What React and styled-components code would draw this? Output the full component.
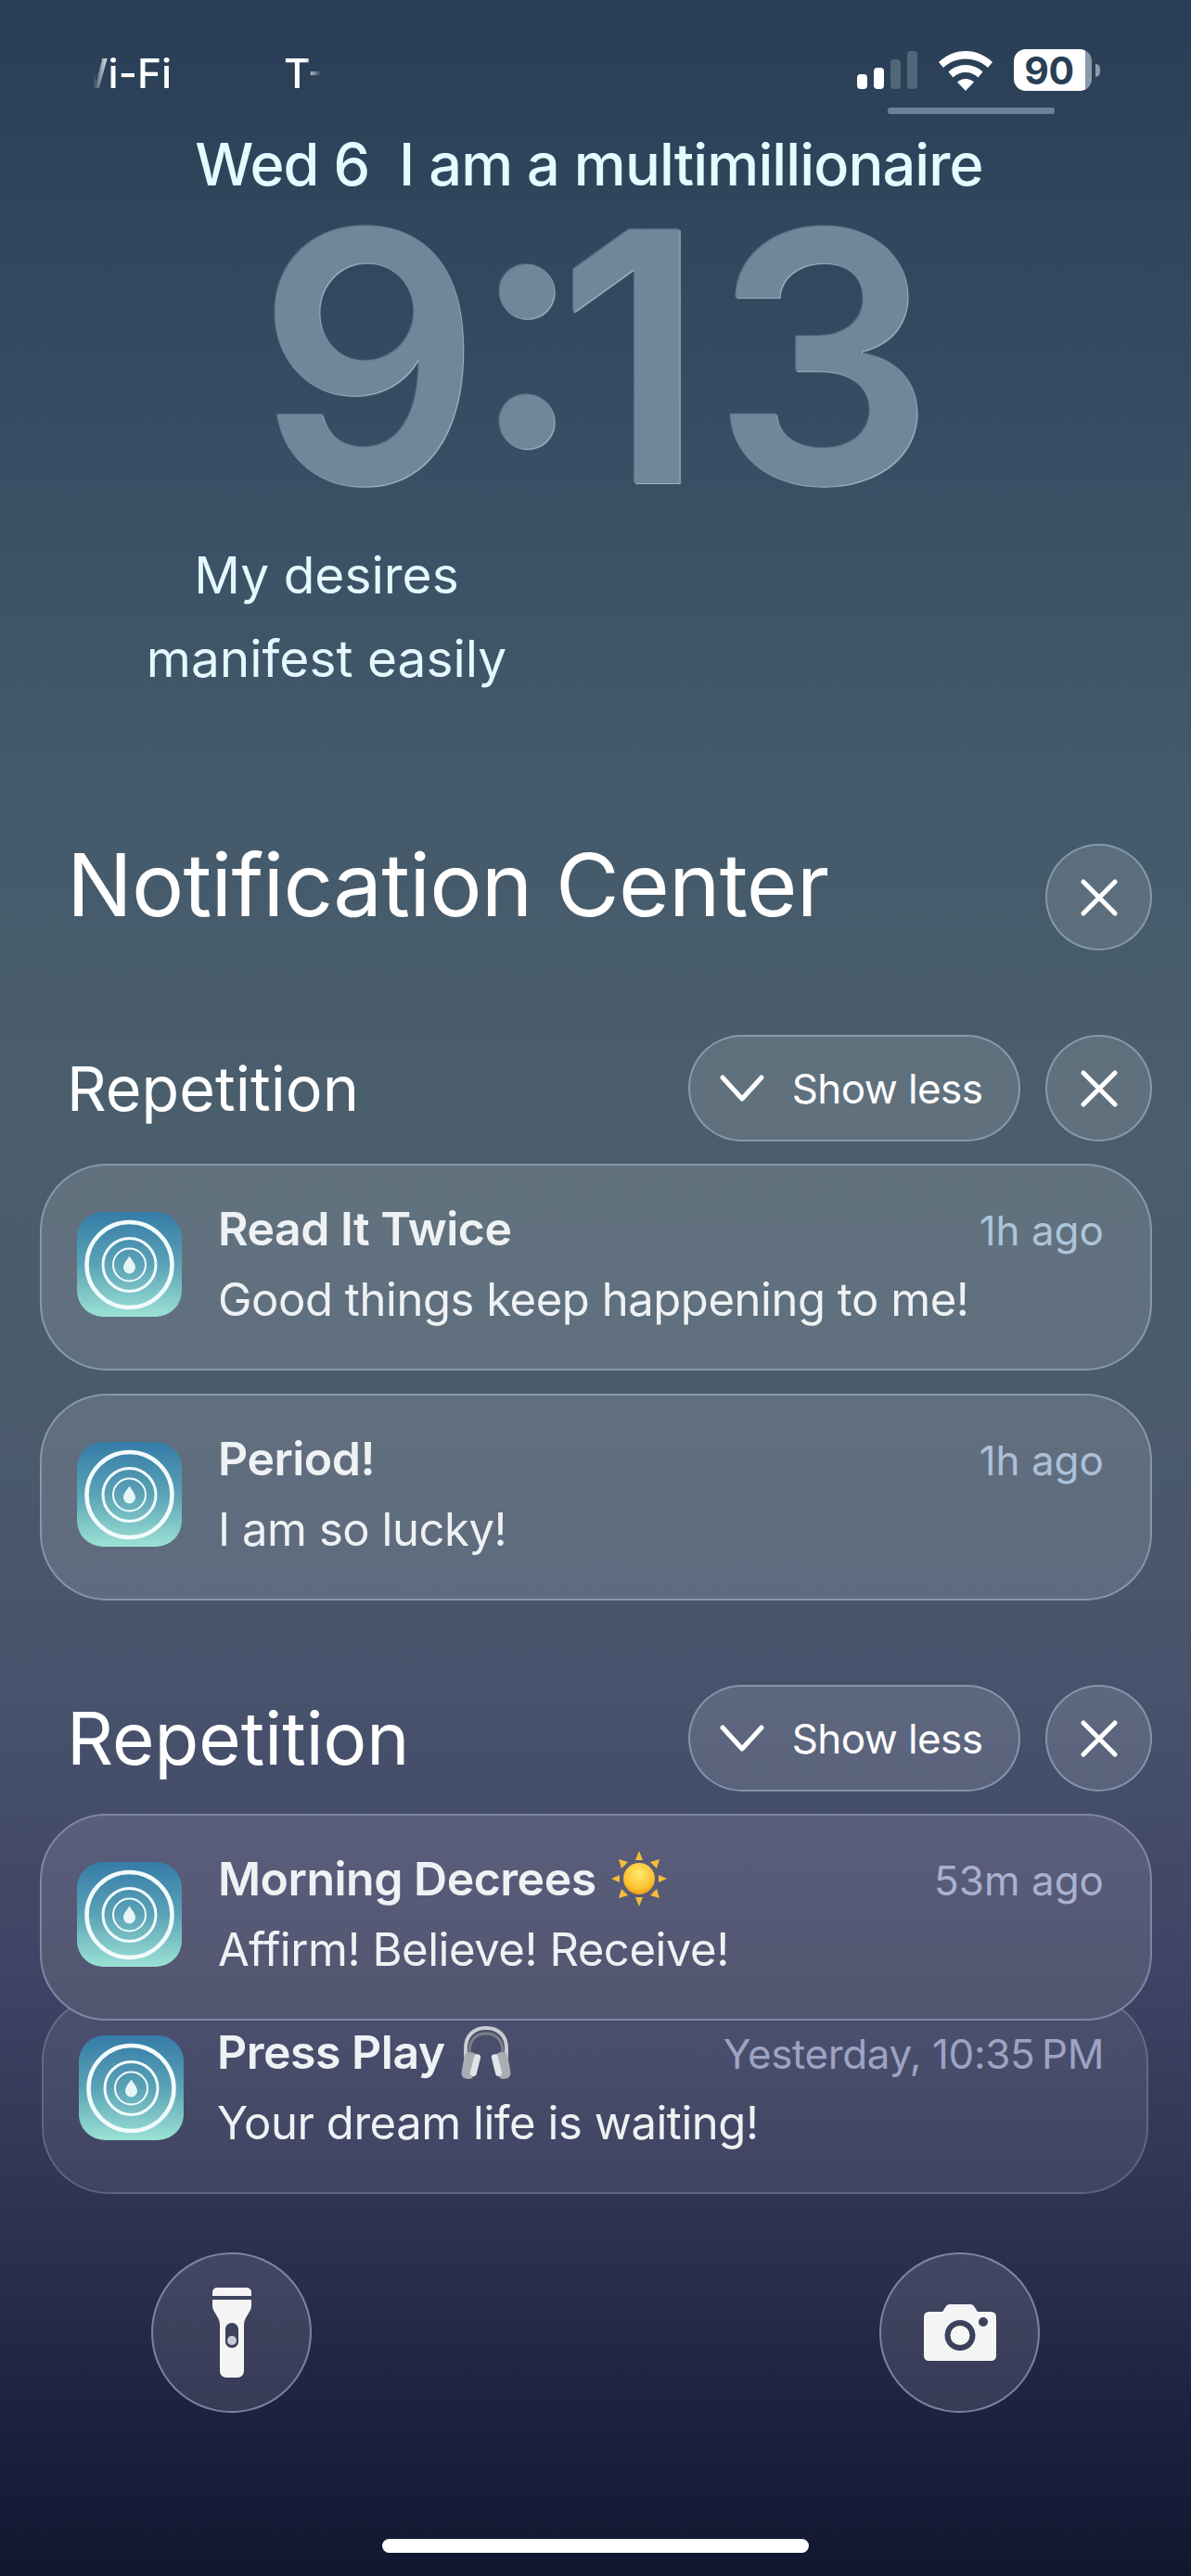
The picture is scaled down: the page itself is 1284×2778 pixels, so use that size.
import styled, { createGlobalStyle } from 'styled-components';

const GlobalStyle = createGlobalStyle`
  html, body {
    margin: 0;
    padding: 0;
    background: #111730;
  }
`;

const Page = styled.div`
  width: 1284px;
  height: 2778px;
  overflow: hidden;
  display: flex;
  flex-direction: column;
  font-family: Inter, "Liberation Sans", sans-serif;
  color: #fff;
  background: linear-gradient(
    180deg,
    #293e56 0%,
    #344c62 15%,
    #435a6b 30%,
    #4b5e6c 44%,
    #4a5a6c 56%,
    #47526c 66%,
    #3f4566 76%,
    #2d3151 87%,
    #1e2342 93%,
    #111730 100%
  );
`;

const StatusBar = styled.div`
  height: 130px;
  display: flex;
  justify-content: space-between;
  padding: 53px 98px 0 100px;
  box-sizing: border-box;
`;

const Carriers = styled.div`
  display: flex;
  gap: 121px;
  height: 52px;
  align-items: center;
`;

const FadedText = styled.div`
  width: ${({ $width }) => $width}px;
  overflow: hidden;
  display: flex;
  justify-content: ${({ $end }) => ($end ? 'flex-end' : 'flex-start')};
  white-space: nowrap;
  font-size: 44px;
  font-weight: 500;
  mask-image: linear-gradient(${({ $end }) => ($end ? '90deg' : '270deg')}, transparent 0, #000 18px);
`;

const StatusRight = styled.div`
  display: flex;
  flex-direction: column;
  align-items: flex-start;
`;

const StatusIcons = styled.div`
  height: 45px;
  display: flex;
  align-items: flex-end;
`;

const Signal = styled.div`
  display: flex;
  align-items: flex-end;
  gap: 7px;
  height: 42px;
  margin-right: 23px;
  margin-bottom: 2px;
`;

const SignalBar = styled.span`
  width: 11px;
  height: ${({ $h }) => $h}px;
  border-radius: 4px;
  background: ${({ $on }) => ($on ? '#fff' : '#526679')};
`;

const Battery = styled.div`
  width: 84px;
  height: 45px;
  margin-left: 23px;
  border-radius: 13px;
  background: linear-gradient(90deg, #fff 0, #fff 92%, #8c9aa8 92%, #8c9aa8 100%);
  display: flex;
  align-items: center;
  justify-content: center;
  padding-right: 8px;
  box-sizing: border-box;
  color: #2a3f57;
  font-size: 41px;
  font-weight: 700;
  letter-spacing: -0.5px;
`;

const BatteryNub = styled.span`
  width: 5px;
  height: 14px;
  margin: 0 0 15px 4px;
  border-radius: 0 7px 7px 0;
  background: #8c9aa8;
`;

const StatusUnderline = styled.div`
  width: 180px;
  height: 7px;
  margin: 18px 0 0 33px;
  border-radius: 3px;
  background: #6a8299;
`;

const DateLine = styled.div`
  height: 94px;
  line-height: 94px;
  text-align: center;
  white-space: pre;
  font-size: 63px;
  font-weight: 500;
  letter-spacing: -0.9px;
  color: #e0fdff;
  padding-right: 14px;
`;

const Clock = styled.div`
  height: 330px;
  margin-top: -4px;
  padding-right: 9px;
  line-height: 330px;
  text-align: center;
  font-size: 376px;
  font-weight: 600;
  color: #6f869b;
  text-shadow: 1px 1px 1px rgba(235, 245, 255, 0.65), -1px -1px 1px rgba(235, 245, 255, 0.25);
`;

const ClockPart = styled.span`
  letter-spacing: ${({ $gap }) => $gap}px;
`;

const ClockColon = styled(ClockPart)`
  display: inline-block;
  transform: translateY(-40px);
`;

const Widget = styled.div`
  width: 704px;
  margin-top: 25px;
  text-align: center;
  font-size: 55px;
  line-height: 90px;
  font-weight: 400;
  color: #e4f8fd;
`;

const HeaderRow = styled.div`
  display: flex;
  align-items: center;
  justify-content: space-between;
  padding: 0 42px 0 72px;
  height: 115px;
  margin-top: ${({ $top }) => $top}px;
`;

const CenterTitle = styled.div`
  font-size: 94px;
  font-weight: 400;
  letter-spacing: -0.8px;
  padding-bottom: 28px;
`;

const GroupTitle = styled.div`
  font-size: ${({ $size }) => $size}px;
  font-weight: 400;
`;

const Actions = styled.div`
  display: flex;
  gap: 27px;
`;

const Glass = styled.button`
  border: 2px solid rgba(170, 198, 218, 0.5);
  background: rgba(255, 255, 255, 0.12);
  color: #fff;
  font-family: inherit;
  padding: 0;
  box-sizing: border-box;
  display: flex;
  align-items: center;
  justify-content: center;
`;

const RoundButton = styled(Glass)`
  width: 115px;
  height: 115px;
  border-radius: 50%;
`;

const Pill = styled(Glass)`
  width: 358px;
  height: 115px;
  padding-right: 7px;
  border-radius: 58px;
  gap: 30px;
  font-size: 44px;
  font-weight: 400;
  letter-spacing: -0.6px;
`;

const Cards = styled.div`
  display: flex;
  flex-direction: column;
  gap: ${({ $gap }) => $gap}px;
  padding: 0 42px 0 43px;
  margin-top: ${({ $top }) => $top}px;
`;

const Card = styled.div`
  position: relative;
  z-index: 2;
  height: 223px;
  padding: 0 50px 6px 38px;
  box-sizing: border-box;
  display: flex;
  align-items: center;
  gap: 39px;
  border-radius: 72px;
  border: 2px solid rgba(175, 200, 222, 0.48);
  background: rgba(255, 255, 255, 0.125);
`;

// sits in front of the tucked card, so it can't be see-through
const FrontCard = styled(Card)`
  border-color: #7f85a6;
  background: linear-gradient(180deg, #5a5e7c 0%, #51556f 100%);
`;

const TuckedCard = styled(Card)`
  z-index: 1;
  height: 215px;
  margin: -28px 4px 0 2px;
  padding: 0 46px 14px 38px;
  gap: 36px;
  border-color: rgba(170, 180, 215, 0.28);
  background: rgba(255, 255, 255, 0.08);
`;

const AppIcon = styled.svg`
  width: 113px;
  height: 113px;
  flex: none;
`;

const CardText = styled.div`
  flex: 1;
  min-width: 0;
  display: flex;
  flex-direction: column;
  gap: 17px;
`;

const TitleRow = styled.div`
  display: flex;
  align-items: baseline;
  justify-content: space-between;
  height: 60px;
  line-height: 60px;
`;

const CardTitle = styled.div`
  display: flex;
  align-items: center;
  gap: 16px;
  font-size: 50px;
  font-weight: 600;
  letter-spacing: -0.5px;
  color: #eff2f4;
`;

const CardTime = styled.div`
  font-size: 44px;
  font-weight: 400;
  letter-spacing: ${({ $tight }) => ($tight ? '-0.4px' : '0')};
  color: ${({ $tint }) => $tint};
`;

const CardBody = styled.div`
  height: 60px;
  line-height: 60px;
  font-size: 49px;
  font-weight: 400;
  letter-spacing: -0.45px;
  color: #eff2f4;
`;

const BottomRow = styled.div`
  display: flex;
  justify-content: space-between;
  padding: 0 163px;
  margin-top: 63px;
`;

const QuickButton = styled(Glass)`
  width: 173px;
  height: 173px;
  border-radius: 50%;
  border-color: rgba(165, 172, 205, 0.62);
  background: rgba(255, 255, 255, 0.115);
`;

const HomeBar = styled.div`
  width: 460px;
  height: 15px;
  margin: 136px auto 0;
  border-radius: 8px;
  background: #fff;
`;

const CloseIcon = () => (
  <svg width="40" height="40" viewBox="0 0 40 40">
    <path d="M3 3 L37 37 M37 3 L3 37" stroke="#fff" strokeWidth="5" strokeLinecap="round" />
  </svg>
);

const ChevronIcon = () => (
  <svg width="48" height="30" viewBox="0 0 48 30">
    <path d="M3 3 L24 26 L45 3" fill="none" stroke="#fff" strokeWidth="5" strokeLinecap="round" strokeLinejoin="round" />
  </svg>
);

const WifiIcon = () => (
  <svg width="58" height="43" viewBox="0 0 58 43">
    <path d="M29 0 C18 0 8 4.5 0 12 L5 18 C11.5 12 19.8 8.500 29 8.500 C38.200 8.500 46.500 12 53 18 L58 12 C50 4.500 40 0 29 0 Z" fill="#fff" />
    <path d="M29 15 C22 15 15.500 17.800 10.500 22.500 L15.500 28.500 C19 25 23.800 23 29 23 C34.200 23 39 25 42.500 28.500 L47.500 22.500 C42.500 17.800 36 15 29 15 Z" fill="#fff" />
    <path d="M29 30 C25.500 30 22.500 31.300 20 33.500 L29 43 L38 33.500 C35.500 31.300 32.500 30 29 30 Z" fill="#fff" />
  </svg>
);

const RippleIcon = ({ id }) => (
  <AppIcon viewBox="0 0 113 113">
    <defs>
      <linearGradient id={id} x1="0" y1="0" x2="0" y2="1">
        <stop offset="0" stopColor="#357ca8" />
        <stop offset="0.5" stopColor="#5ba2b6" />
        <stop offset="1" stopColor="#9be2d5" />
      </linearGradient>
    </defs>
    <rect width="113" height="113" rx="28" fill={`url(#${id})`} />
    <g fill="none" stroke="#f2fbfc">
      <circle cx="56.500" cy="57" r="46" strokeWidth="4.500" />
      <circle cx="56.500" cy="57" r="28.500" strokeWidth="3" />
      <circle cx="56.500" cy="57" r="17.500" strokeWidth="2" />
    </g>
    <path d="M56.500 47.500 C60 53 63 56 63 60 A6.500 6.500 0 0 1 50 60 C50 56 53 53 56.500 47.500 Z" fill="#e6f5f7" />
  </AppIcon>
);

const SunEmoji = () => (
  <svg width="60" height="60" viewBox="0 0 60 60">
    <defs>
      <radialGradient id="sunFill" cx="0.5" cy="0.35" r="0.7">
        <stop offset="0" stopColor="#ffe96b" />
        <stop offset="0.7" stopColor="#fbc02e" />
        <stop offset="1" stopColor="#e88d16" />
      </radialGradient>
    </defs>
    <g fill="#f7bd38">
      <path d="M30 0 L34 10 L26 10 Z" />
      <path d="M30 60 L34 50 L26 50 Z" />
      <path d="M0 30 L9 26 L9 34 Z" />
      <path d="M60 30 L51 26 L51 34 Z" />
      <path d="M8 9 L18 12 L11 19 Z" />
      <path d="M52 9 L42 12 L49 19 Z" />
      <path d="M8 51 L18 48 L11 41 Z" />
      <path d="M52 51 L42 48 L49 41 Z" />
    </g>
    <circle cx="30" cy="30" r="17" fill="url(#sunFill)" />
  </svg>
);

const HeadphonesEmoji = () => (
  <svg width="56" height="60" viewBox="0 0 56 60">
    <path d="M6 38 V26 C6 12 15 4 28 4 C41 4 50 12 50 26 V38" fill="none" stroke="#c9ccd1" strokeWidth="4" />
    <path d="M10 30 C10 16 18 10 28 10 C38 10 46 16 46 30" fill="none" stroke="#7d8087" strokeWidth="3" />
    <rect x="3" y="30" width="14" height="29" rx="6" fill="#a9adb3" transform="rotate(10 10 44)" />
    <rect x="39" y="30" width="14" height="29" rx="6" fill="#a9adb3" transform="rotate(-10 46 44)" />
    <rect x="13" y="32" width="7" height="24" rx="3" fill="#e2e4e7" transform="rotate(14 16 44)" />
    <rect x="36" y="32" width="7" height="24" rx="3" fill="#e2e4e7" transform="rotate(-14 40 44)" />
  </svg>
);

const FlashlightIcon = () => (
  <svg width="42" height="97" viewBox="0 0 42 97">
    <path d="M0 5 A5 5 0 0 1 5 0 H37 A5 5 0 0 1 42 5 V9 H0 Z" fill="#f5f5f6" />
    <path
      fillRule="evenodd"
      d="M0 13 H42 V20 C42 26 34 32 34 40 V90 A7 7 0 0 1 27 97 H15 A7 7 0 0 1 8 90 V40 C8 32 0 26 0 20 Z M21 38 C17 38 14 41 14 45 V58 C14 62 17 65 21 65 C25 65 28 62 28 58 V45 C28 41 25 38 21 38 Z"
      fill="#f5f5f6"
    />
    <ellipse cx="21" cy="57" rx="5" ry="5" fill="#c9cbd6" />
  </svg>
);

const CameraIcon = () => (
  <svg width="78" height="61" viewBox="0 0 78 61">
    <path
      fillRule="evenodd"
      d="M6 8 H20 L24 2 Q25 0 28 0 H50 Q53 0 54 2 L58 8 H72 Q78 8 78 14 V55 Q78 61 72 61 H6 Q0 61 0 55 V14 Q0 8 6 8 Z M39 17 A16.500 16.500 0 1 0 39 50 A16.500 16.500 0 1 0 39 17 Z M64 14 A4.500 4.500 0 1 0 64 24 A4.500 4.500 0 1 0 64 14 Z"
      fill="#f5f5f6"
    />
    <circle cx="39" cy="33.500" r="10.500" fill="#f5f5f6" />
  </svg>
);

const App = () => (
  <Page>
    <GlobalStyle />
    <StatusBar>
      <Carriers>
        <FadedText $width={85} $end>Wi-Fi</FadedText>
        <FadedText $width={40}>T-Mobile</FadedText>
      </Carriers>
      <StatusRight>
        <StatusIcons>
          <Signal>
            <SignalBar $h={16} $on />
            <SignalBar $h={23} $on />
            <SignalBar $h={32} />
            <SignalBar $h={41} />
          </Signal>
          <WifiIcon />
          <Battery>90</Battery>
          <BatteryNub />
        </StatusIcons>
        <StatusUnderline />
      </StatusRight>
    </StatusBar>

    <DateLine>{'Wed 6  I am a multimillionaire'}</DateLine>
    <Clock>
      <ClockPart $gap={-10}>9</ClockPart>
      <ClockColon $gap={-27}>:</ClockColon>
      <ClockPart $gap={8}>1</ClockPart>
      <ClockPart $gap={-10}>3</ClockPart>
    </Clock>

    <Widget>
      My desires
      <br />
      manifest easily
    </Widget>

    <HeaderRow $top={155}>
      <CenterTitle>Notification Center</CenterTitle>
      <RoundButton aria-label="Clear"><CloseIcon /></RoundButton>
    </HeaderRow>

    <HeaderRow $top={91}>
      <GroupTitle $size={66.5}>Repetition</GroupTitle>
      <Actions>
        <Pill><ChevronIcon />Show less</Pill>
        <RoundButton aria-label="Close"><CloseIcon /></RoundButton>
      </Actions>
    </HeaderRow>
    <Cards $top={24} $gap={25}>
      <Card>
        <RippleIcon id="iconA" />
        <CardText>
          <TitleRow>
            <CardTitle>Read It Twice</CardTitle>
            <CardTime $tint="#acc5da">1h ago</CardTime>
          </TitleRow>
          <CardBody>Good things keep happening to me!</CardBody>
        </CardText>
      </Card>
      <Card>
        <RippleIcon id="iconB" />
        <CardText>
          <TitleRow>
            <CardTitle>Period!</CardTitle>
            <CardTime $tint="#acc0d8">1h ago</CardTime>
          </TitleRow>
          <CardBody>I am so lucky!</CardBody>
        </CardText>
      </Card>
    </Cards>

    <HeaderRow $top={91}>
      <GroupTitle $size={78}>Repetition</GroupTitle>
      <Actions>
        <Pill><ChevronIcon />Show less</Pill>
        <RoundButton aria-label="Close"><CloseIcon /></RoundButton>
      </Actions>
    </HeaderRow>
    <Cards $top={24} $gap={0}>
      <FrontCard>
        <RippleIcon id="iconC" />
        <CardText>
          <TitleRow>
            <CardTitle>Morning Decrees <SunEmoji /></CardTitle>
            <CardTime $tint="#a9b1d0">53m ago</CardTime>
          </TitleRow>
          <CardBody>Affirm! Believe! Receive!</CardBody>
        </CardText>
      </FrontCard>
      <TuckedCard>
        <RippleIcon id="iconD" />
        <CardText>
          <TitleRow>
            <CardTitle>Press Play <HeadphonesEmoji /></CardTitle>
            <CardTime $tint="#9da3c4" $tight>{'Yesterday, 10:35\u2009PM'}</CardTime>
          </TitleRow>
          <CardBody>Your dream life is waiting!</CardBody>
        </CardText>
      </TuckedCard>
    </Cards>

    <BottomRow>
      <QuickButton aria-label="Flashlight"><FlashlightIcon /></QuickButton>
      <QuickButton aria-label="Camera"><CameraIcon /></QuickButton>
    </BottomRow>
    <HomeBar />
  </Page>
);

export default App;
